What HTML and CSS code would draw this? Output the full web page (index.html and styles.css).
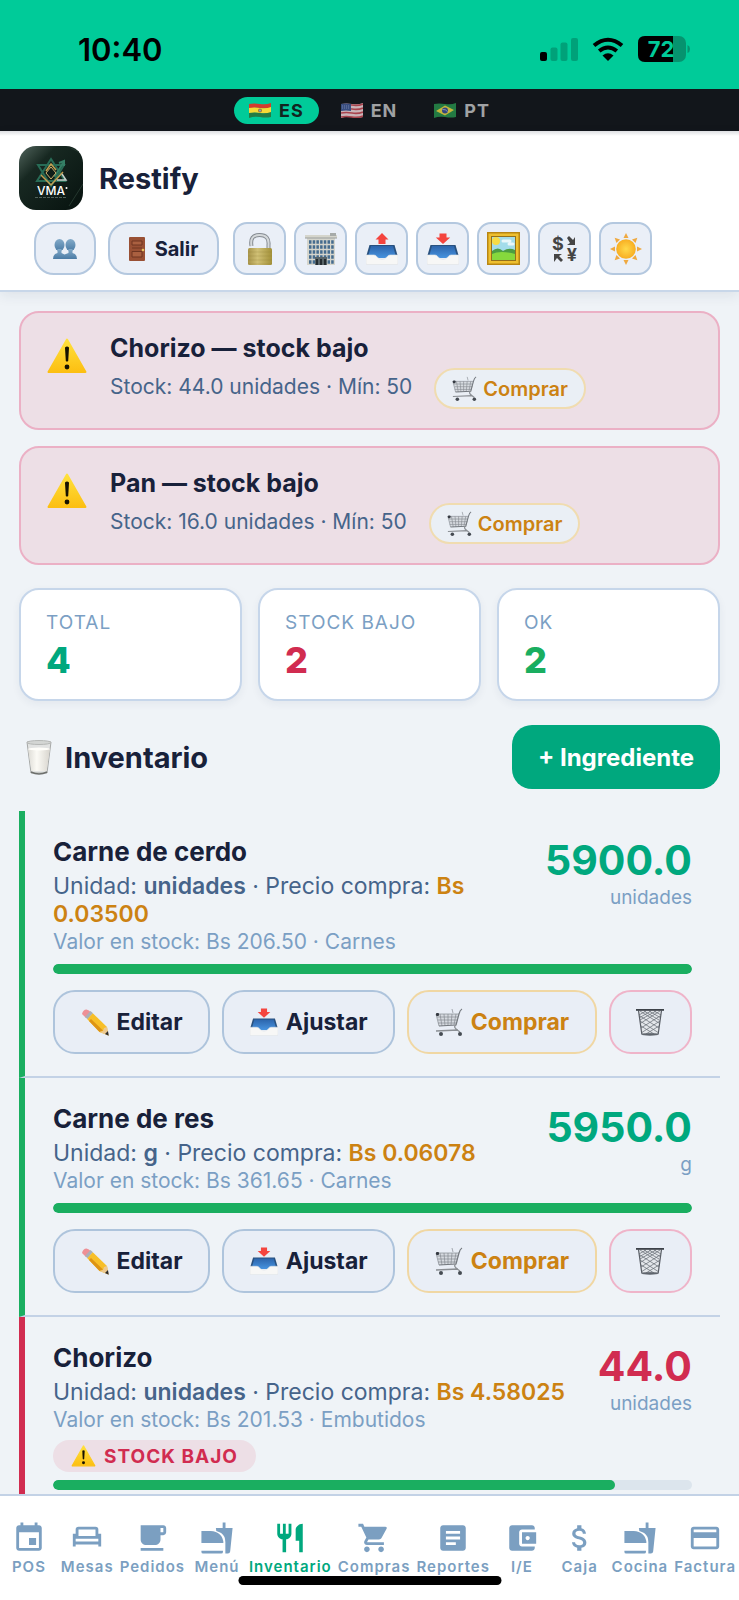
FILE: index.html
```html
<!DOCTYPE html>
<html lang="es">
<head>
  <meta charset="UTF-8">
  <meta name="viewport" content="width=device-width, initial-scale=1.0">
  <title>Restify</title>
  <link rel="stylesheet" href="styles.css">
</head>
<body>

  <!-- shared icons -->
  <svg class="sprite" aria-hidden="true">
    <defs>
      <linearGradient id="gWarn" x1="0" y1="0" x2="0" y2="1"><stop offset="0" stop-color="#ffe13d"/><stop offset="1" stop-color="#fcbf12"/></linearGradient>
      <linearGradient id="gPeople" x1="0" y1="0" x2="0" y2="1"><stop offset="0" stop-color="#84abc9"/><stop offset="1" stop-color="#4a7ba5"/></linearGradient>
      <linearGradient id="gLock" x1="0" y1="0" x2="1" y2="0"><stop offset="0" stop-color="#a8954a"/><stop offset=".4" stop-color="#d0c075"/><stop offset="1" stop-color="#a39139"/></linearGradient>
      <linearGradient id="gTray" x1="0" y1="0" x2="0" y2="1"><stop offset="0" stop-color="#2c64ab"/><stop offset="1" stop-color="#4793df"/></linearGradient>
      <radialGradient id="gSun"><stop offset="0" stop-color="#ffd94a"/><stop offset="1" stop-color="#f8ae22"/></radialGradient>
      <linearGradient id="gLogo" x1="0" y1="0" x2="1" y2="1"><stop offset="0" stop-color="#52655d"/><stop offset=".3" stop-color="#172821"/><stop offset="1" stop-color="#07120f"/></linearGradient>
      <linearGradient id="gMilk" x1="0" y1="0" x2="1" y2="0"><stop offset="0" stop-color="#dedcd6"/><stop offset=".4" stop-color="#fbfaf5"/><stop offset="1" stop-color="#d8d5ce"/></linearGradient>
    </defs>
    <symbol id="warning" viewBox="0 0 40 36">
      <path d="M20 1.500L38.500 34H1.500z" fill="url(#gWarn)" stroke="url(#gWarn)" stroke-width="2" stroke-linejoin="round"/>
      <path d="M18 9.500q2-1.800 4 0l-.8 13.500q-1.200 1.200-2.400 0z" fill="#161200"/>
      <circle cx="20" cy="29" r="2.400" fill="#161200"/>
    </symbol>
    <symbol id="cart" viewBox="0 0 28 28">
      <path d="M1 6h23l-2 11-18 1z" fill="#c9cdd2" opacity=".6"/>
      <g fill="none" stroke="#858a90" stroke-width=".7">
        <path d="M1 6h23M2 9h21M3 12h20M3 15h19M1 6l3 12M5 6l2 12M9 6l1 12M13 6v11M17 6l-1 11M21 6l-2 11"/>
        <path d="M27 1q-2 1-3 5l-3 11-17 1" stroke="#74797f" stroke-width="1.200"/>
        <path d="M21 17q-4 2 4 7M1 23l22-1" stroke="#8b8f94" stroke-width="1.300"/>
        <path d="M18 5l-1-4"/>
      </g>
      <rect x="1" y="5" width="3" height="3" rx="1" fill="#343941"/>
      <circle cx="6" cy="26" r="2" fill="#454b52"/><circle cx="25" cy="26" r="2" fill="#454b52"/>
    </symbol>
    <symbol id="inbox" viewBox="0 0 32 32">
      <path d="M3.500 12h25L32 24H0z" fill="#28517f"/>
      <path d="M5 13h22l2.500 9-4 3H6.500l-4-3z" fill="url(#gTray)"/>
      <path d="M0 22h8q2 0 3 2 5 5 10 0 1-2 3-2h8v8.500q0 1-1 1H1q-1 0-1-1z" fill="#f7f7f6" stroke="#dfe2e6" stroke-width=".6"/>
      <path d="M12.500.5h7v4h3.700L16 11 8.800 4.500h3.700z" fill="#f4443e"/>
    </symbol>
    <symbol id="outbox" viewBox="0 0 32 32">
      <path d="M3.500 12h25L32 24H0z" fill="#28517f"/>
      <path d="M5 13h22l2.500 9-4 3H6.500l-4-3z" fill="url(#gTray)"/>
      <path d="M0 22h8q2 0 3 2 5 5 10 0 1-2 3-2h8v8.500q0 1-1 1H1q-1 0-1-1z" fill="#f7f7f6" stroke="#dfe2e6" stroke-width=".6"/>
      <path d="M16 0l6.500 6.500h-3V11h-7V6.500h-3z" fill="#f4443e"/>
    </symbol>
    <symbol id="pencil" viewBox="0 0 28 28">
      <path d="M5.500 1.500Q2 1.500 1 6l4 4 5-5.500q-2-2.500-4.500-3z" fill="#ee9096"/>
      <path d="M4 9l5.500-6 2.500 2.300-5.500 6z" fill="#aab0b8"/>
      <path d="M6.300 11.200l5.500-6L26 19l1.500 8.500-9-3.500z" fill="#f7bf28"/>
      <path d="M8 13l2-2 12 11.500-3.500 1.500z" fill="#dd9415"/>
      <path d="M18.500 24l3.500-1 1-3 3-1 1.500 8.500z" fill="#ecc991"/>
      <path d="M24 26l3-3 .7 4.700z" fill="#2c2b2b"/>
    </symbol>
    <symbol id="trash" viewBox="0 0 28 28">
      <path d="M2 2h24l-3.500 24h-17z" fill="#e3e6ea"/>
      <path d="M4 3l19 12M8 3l15 9M13 3l12 7M18 3l7 4M4 8l19 12M4 13l19 12M5 18l13 8M24 3L5 15M20 3L4 12M15 3L3 10M10 3L3 7M24 8L5 20M24 13L5 25M23 18l-13 8" fill="none" stroke="#70767e" stroke-width=".8"/>
      <path d="M2.500 2.500L5.800 26h16.400l3.300-23.500" fill="none" stroke="#595e66" stroke-width="1.200"/>
      <path d="M0 1h28v1.800H0z" fill="#3d4249"/>
      <ellipse cx="14" cy="26.500" rx="8.500" ry="1.200" fill="#5f656d"/>
    </symbol>
    <symbol id="fastfood" viewBox="0 0 24 24">
      <path d="M16 5V1h2v4h5l-1.700 16.500q-.2 1.500-1.600 1.500h-1.800v-8q0-4.500-3-6.500-1.400-1-3.400-1.500L11.200 5zM1 7h6.500q4 0 6.500 2.500t2.500 6H1zM1 21h15.200v.8q0 1.200-1.200 1.200H2.200Q1 23 1 21.800z"/>
    </symbol>
  </svg>

  <div class="status-bar">
    <span class="time">10:40</span>
    <div class="status-icons">
      <svg class="signal" viewBox="0 0 38 24">
        <rect x="0" y="15" width="7" height="9" rx="2"/>
        <g opacity=".2"><rect x="10.500" y="10.500" width="7" height="13.500" rx="2"/><rect x="20.500" y="5.500" width="7" height="18.500" rx="2"/><rect x="31" y="1" width="7" height="23" rx="2"/></g>
      </svg>
      <svg class="wifi" viewBox="0 0 32 24">
        <path d="M2 8.500q14-11.500 28 0M7.200 14q8.800-7 17.600 0" fill="none" stroke="#000" stroke-width="4"/>
        <path d="M10.500 18.500q5.500-4.500 11 0L16 24z"/>
      </svg>
      <svg class="battery" viewBox="0 0 52 26">
        <rect width="48" height="26" rx="7" fill="#06936f"/>
        <path d="M7 0h28v26H7q-7 0-7-7V7q0-7 7-7z"/>
        <path d="M49.500 9q2.500 1 2.500 4t-2.500 4z" fill="#06936f"/>
        <text x="23" y="21" text-anchor="middle" class="battery-level">72</text>
      </svg>
    </div>
  </div>

  <div class="lang-bar">
    <button class="lang active">
      <svg class="flag" viewBox="0 0 22 15"><path d="M0 1q5-1 11 0t11-1v5q-5 1-11 0T0 6z" fill="#d53b2e"/><path d="M0 5q5-1 11 0t11-1v6q-5 1-11 0T0 11z" fill="#f6da36"/><path d="M0 10q5-1 11 0t11-1v5q-5 1-11 0T0 15z" fill="#247c45"/><circle cx="11" cy="7.500" r="2" fill="#a3713a"/><circle cx="11" cy="7.500" r="1" fill="#7ab0c5"/></svg>
      ES</button>
    <button class="lang">
      <svg class="flag" viewBox="0 0 22 15"><path d="M0 1q5-1 11 0t11-1v14q-5 1-11 0T0 15z" fill="#c9b4b8"/><path d="M0 2q5-1 11 0t11-1M0 6q5-1 11 0t11-1M0 10q5-1 11 0t11-1M0 14q5-1 11 0t11-1" fill="none" stroke="#a8434d" stroke-width="1.700"/><path d="M0 1q5-1 10 0v7q-5-1-10 0z" fill="#384d80"/><path d="M1 3h8M1 5h8" stroke="#8e99b8" stroke-width=".7" stroke-dasharray="1 1"/></svg>
      EN</button>
    <button class="lang">
      <svg class="flag" viewBox="0 0 22 15"><path d="M0 1q5-1 11 0t11-1v14q-5 1-11 0T0 15z" fill="#237a43"/><path d="M2 8l9-5.500L20 7l-9 5.500z" fill="#c5b63c"/><circle cx="11" cy="7.500" r="3" fill="#34467e"/><path d="M8.500 6.500q3-.5 5 2" stroke="#aab4c5" stroke-width=".7" fill="none"/></svg>
      PT</button>
  </div>

  <header class="header">
    <div class="brand">
      <svg class="logo" viewBox="0 0 64 64">
        <rect width="64" height="64" rx="17" fill="url(#gLogo)"/>
        <path d="M60 6L52 2M64 38L50 60" stroke="#24372f" stroke-width="1"/>
        <path d="M32 13L46 35H18zM32 40L19 19h26z" fill="none" stroke="#286c56" stroke-width="2"/>
        <path d="M32 26l4 4 8-13M40 17l5-2v5" fill="none" stroke="#347f65" stroke-width="2"/>
        <path d="M22 29l10 10 12-13M27 25l5-7 5 6" fill="none" stroke="#c39e50" stroke-width="1.500"/>
        <path d="M32 21l5 6-5 6-5-6z" fill="#101d19" stroke="#d1b16c" stroke-width="1"/>
        <path d="M38 34h9l-4-6" fill="none" stroke="#c5cfca" stroke-width="1.500"/>
        <text x="32" y="49" text-anchor="middle" class="logo-text">VMA</text>
        <circle cx="47.500" cy="42" r="1" fill="#fff"/>
        <path d="M16 51.500h32" stroke="#506159" stroke-width="1" stroke-dasharray="3 1"/>
      </svg>
      <h1>Restify</h1>
    </div>
    <div class="toolbar">
      <button class="tool tool-user" aria-label="Usuarios">
        <svg width="24" height="20" viewBox="0 0 24 20" fill="url(#gPeople)"><ellipse cx="6.500" cy="6" rx="5" ry="6"/><ellipse cx="17.500" cy="6" rx="5" ry="6"/><path d="M4.500 10h4v4l3 1.500 4-1.500v-4h4v4q4.500 1 4.500 6H0q0-5 4.500-6z"/></svg>
      </button>
      <button class="tool tool-exit">
        <svg width="16" height="24" viewBox="0 0 16 24"><rect width="16" height="24" rx="1" fill="#995034"/><path d="M3 4h10v4H3zM3 14.500h10V20H3z" fill="#aa6040" stroke="#6e3521" stroke-width="1"/><path d="M3 11h10" stroke="#713721"/><circle cx="14" cy="13" r="1.300" fill="#e5c462"/></svg>
        Salir
      </button>
      <div class="tool-icons">
        <button class="tool" aria-label="Candado">
          <svg width="26" height="34" viewBox="0 0 26 34"><path d="M4.500 14q-2-11 8-11t9 10v5" fill="none" stroke="#858b91" stroke-width="4"/><path d="M4.500 14q-2-11 8-11t9 10v5" fill="none" stroke="#d5d9db" stroke-width="2"/><rect x="1" y="16" width="24" height="17" rx="1.500" fill="url(#gLock)"/><path d="M1 20h24M1 24h24M1 28h24M1 32h24" stroke="#8d7d36" stroke-width=".6" opacity=".4"/></svg>
        </button>
        <button class="tool" aria-label="Sucursal">
          <svg width="32" height="32" viewBox="0 0 32 32"><path d="M0 2h32v3H0zM2 5h28v27H2z" fill="#d5d5cc"/><path d="M0 5h32" stroke="#9a9e9d"/><path d="M25 0h6v3h-6z" fill="#a7aba9"/><path d="M4 9h25M4 14h25M4 19h25M4 24h25M4 29h25" stroke="#456c8e" stroke-width="3.400" stroke-dasharray="2.500 1.200"/><path d="M10 24h12v8H10z" fill="#596569"/><path d="M12 26v6M16 26v6M20 26v6" stroke="#242d32" stroke-width="2"/></svg>
        </button>
        <button class="tool" aria-label="Exportar"><svg width="32" height="32"><use href="#outbox"/></svg></button>
        <button class="tool" aria-label="Importar"><svg width="32" height="32"><use href="#inbox"/></svg></button>
        <button class="tool" aria-label="Imagen">
          <svg width="33" height="33" viewBox="0 0 33 33"><rect width="33" height="33" fill="#b98612"/><rect x="1.500" y="1.500" width="30" height="30" fill="#eebf2f"/><rect x="4" y="4" width="25" height="25" fill="#93701b"/><rect x="5" y="5" width="23" height="23" fill="#a3dcea"/><circle cx="9" cy="9" r="4" fill="#f7dc45"/><path d="M16 9h7M22 12h4" stroke="#eaf7fa" stroke-width="3" stroke-linecap="round"/><path d="M5 19q6-5 11 0 6-4 12-1v10H5z" fill="#4c9d42"/><path d="M5 22q8-4 23 0v6H5z" fill="#86d83d"/></svg>
        </button>
        <button class="tool" aria-label="Tipo de cambio">
          <svg width="28" height="34" viewBox="0 0 28 34" fill="#454545"><text x="7" y="18" text-anchor="middle" class="currency">$</text><text x="21" y="29" text-anchor="middle" class="currency">¥</text><path d="M16 6l2-2 4 4 2-3v8h-8l3-2zM3 22h8l-3 2 4 4-2 2-4-4-3 4z"/></svg>
        </button>
        <button class="tool" aria-label="Tema claro">
          <svg width="32" height="32" viewBox="0 0 32 32"><g fill="#efa940"><path id="ray" d="M13.500 5L16 0l2.500 5z"/><use href="#ray" transform="rotate(45 16 16)"/><use href="#ray" transform="rotate(90 16 16)"/><use href="#ray" transform="rotate(135 16 16)"/><use href="#ray" transform="rotate(180 16 16)"/><use href="#ray" transform="rotate(225 16 16)"/><use href="#ray" transform="rotate(270 16 16)"/><use href="#ray" transform="rotate(315 16 16)"/></g><circle cx="16" cy="16" r="9.800" fill="url(#gSun)"/></svg>
        </button>
      </div>
    </div>
  </header>

  <main class="content">

    <section class="alert">
      <svg class="alert-icon"><use href="#warning"/></svg>
      <div>
        <h2>Chorizo — stock bajo</h2>
        <div class="alert-row">
          <p>Stock: 44.0 unidades · Mín: 50</p>
          <button class="btn-buy"><svg><use href="#cart"/></svg>Comprar</button>
        </div>
      </div>
    </section>

    <section class="alert">
      <svg class="alert-icon"><use href="#warning"/></svg>
      <div>
        <h2>Pan — stock bajo</h2>
        <div class="alert-row">
          <p>Stock: 16.0 unidades · Mín: 50</p>
          <button class="btn-buy"><svg><use href="#cart"/></svg>Comprar</button>
        </div>
      </div>
    </section>

    <div class="stats">
      <div class="stat"><p class="stat-label">Total</p><p class="stat-value">4</p></div>
      <div class="stat"><p class="stat-label">Stock bajo</p><p class="stat-value red">2</p></div>
      <div class="stat"><p class="stat-label">OK</p><p class="stat-value ok">2</p></div>
    </div>

    <div class="section-head">
      <svg class="milk" viewBox="0 0 26 35"><path d="M1 2l4 31h16l4-31z" fill="#e2e3e2" stroke="#a6a8a7" stroke-width="1"/><path d="M2 9h22l-3.500 22h-15z" fill="url(#gMilk)"/><ellipse cx="13" cy="2.500" rx="12" ry="2" fill="#d4d6d4" stroke="#b6b8b6"/><ellipse cx="13" cy="9" rx="11" ry="1.500" fill="#fffefa"/><path d="M5 32q8 4 16 0" fill="none" stroke="#6d6f6c" stroke-width="1.500"/></svg>
      <h2>Inventario</h2>
      <button class="btn-add">+ Ingrediente</button>
    </div>

    <ul class="items">
      <li class="item">
        <div class="item-top">
          <div class="item-info">
            <h3>Carne de cerdo</h3>
            <p class="unit">Unidad: <b>unidades</b> · Precio compra: <b class="price">Bs 0.03500</b></p>
            <p class="value">Valor en stock: Bs 206.50 · Carnes</p>
          </div>
          <div class="qty"><strong>5900.0</strong><span>unidades</span></div>
        </div>
        <div class="bar"><div class="bar-fill" style="width: 100%"></div></div>
        <div class="actions">
          <button class="btn"><svg><use href="#pencil"/></svg>Editar</button>
          <button class="btn"><svg><use href="#inbox"/></svg>Ajustar</button>
          <button class="btn buy"><svg><use href="#cart"/></svg>Comprar</button>
          <button class="btn delete" aria-label="Eliminar"><svg><use href="#trash"/></svg></button>
        </div>
      </li>

      <li class="item">
        <div class="item-top">
          <div class="item-info">
            <h3>Carne de res</h3>
            <p class="unit">Unidad: <b>g</b> · Precio compra: <b class="price">Bs 0.06078</b></p>
            <p class="value">Valor en stock: Bs 361.65 · Carnes</p>
          </div>
          <div class="qty"><strong>5950.0</strong><span>g</span></div>
        </div>
        <div class="bar"><div class="bar-fill" style="width: 100%"></div></div>
        <div class="actions">
          <button class="btn"><svg><use href="#pencil"/></svg>Editar</button>
          <button class="btn"><svg><use href="#inbox"/></svg>Ajustar</button>
          <button class="btn buy"><svg><use href="#cart"/></svg>Comprar</button>
          <button class="btn delete" aria-label="Eliminar"><svg><use href="#trash"/></svg></button>
        </div>
      </li>

      <li class="item low">
        <div class="item-top">
          <div class="item-info">
            <h3>Chorizo</h3>
            <p class="unit">Unidad: <b>unidades</b> · Precio compra: <b class="price">Bs 4.58025</b></p>
            <p class="value">Valor en stock: Bs 201.53 · Embutidos</p>
            <span class="badge"><svg><use href="#warning"/></svg>Stock bajo</span>
          </div>
          <div class="qty"><strong>44.0</strong><span>unidades</span></div>
        </div>
        <div class="bar"><div class="bar-fill" style="width: 88%"></div></div>
      </li>
    </ul>
  </main>

  <nav class="tabs">
    <a href="#"><svg viewBox="0 0 24 24"><path d="M17 12h-5v5h5v-5zM16 1v2H8V1H6v2H5c-1.110 0-1.990.9-1.990 2L3 19c0 1.100.89 2 2 2h14c1.100 0 2-.9 2-2V5c0-1.100-.9-2-2-2h-1V1h-2zm3 18H5V8h14v11z"/></svg>POS</a>
    <a href="#"><svg viewBox="0 0 24 24"><path d="M5 11V6a1 1 0 0 1 1-1h12a1 1 0 0 1 1 1v5M3 18V9M21 18V9M3 11.500h18M3 15.500h18" fill="none" stroke="currentColor" stroke-width="2"/></svg>Mesas</a>
    <a href="#"><svg viewBox="0 0 24 24"><path d="M20 3H4v10c0 2.210 1.790 4 4 4h6c2.210 0 4-1.790 4-4v-3h2c1.110 0 2-.9 2-2V5c0-1.110-.89-2-2-2zm0 5h-2V5h2v3zM4 19h16v2H4z"/></svg>Pedidos</a>
    <a href="#"><svg><use href="#fastfood"/></svg>Menú</a>
    <a href="#" class="active"><svg viewBox="0 0 24 24"><path d="M11 9H9V2H7v7H5V2H3v7c0 2.120 1.660 3.840 3.750 3.970V22h2.500v-9.030C11.340 12.840 13 11.120 13 9V2h-2v7zm5-3v8h2.500v8H21V2c-2.760 0-5 2.240-5 4z"/></svg>Inventario</a>
    <a href="#"><svg viewBox="0 0 24 24"><path d="M7 18c-1.100 0-1.990.9-1.990 2S5.900 22 7 22s2-.9 2-2-.9-2-2-2zM1 2v2h2l3.600 7.590-1.350 2.450c-.16.28-.25.61-.25.96 0 1.100.9 2 2 2h12v-2H7.420c-.14 0-.25-.11-.25-.25l.03-.12.9-1.630h7.450c.75 0 1.410-.41 1.750-1.030l3.580-6.490A1 1 0 0 0 20 4H5.210l-.94-2H1zm16 16c-1.100 0-1.990.9-1.990 2s.89 2 1.990 2 2-.9 2-2-.9-2-2-2z"/></svg>Compras</a>
    <a href="#"><svg viewBox="0 0 24 24"><path d="M19 3H5c-1.100 0-2 .9-2 2v14c0 1.100.9 2 2 2h14c1.100 0 2-.9 2-2V5c0-1.100-.9-2-2-2zm-5 14H7v-2h7v2zm3-4H7v-2h10v2zm0-4H7V7h10v2z"/></svg>Reportes</a>
    <a href="#"><svg viewBox="0 0 24 24"><path d="M21 18v1c0 1.100-.9 2-2 2H5c-1.110 0-2-.9-2-2V5c0-1.100.89-2 2-2h14c1.100 0 2 .9 2 2v1h-9c-1.110 0-2 .9-2 2v8c0 1.100.89 2 2 2h9zm-9-2h10V8H12v8zm4-2.500c-.83 0-1.500-.67-1.500-1.500s.67-1.500 1.500-1.500 1.500.67 1.500 1.500-.67 1.500-1.500 1.500z"/></svg>I/E</a>
    <a href="#"><svg viewBox="0 0 24 24"><path d="M11.800 10.900c-2.270-.59-3-1.200-3-2.150 0-1.090 1.010-1.850 2.700-1.850 1.780 0 2.440.85 2.500 2.100h2.210c-.07-1.720-1.120-3.300-3.210-3.810V3h-3v2.160c-1.940.42-3.500 1.680-3.500 3.610 0 2.310 1.910 3.460 4.700 4.130 2.500.6 3 1.480 3 2.410 0 .69-.49 1.790-2.700 1.790-2.060 0-2.870-.92-2.980-2.100h-2.200c.12 2.190 1.760 3.420 3.680 3.830V21h3v-2.150c1.950-.37 3.500-1.500 3.500-3.550 0-2.840-2.430-3.810-4.700-4.400z"/></svg>Caja</a>
    <a href="#"><svg><use href="#fastfood"/></svg>Cocina</a>
    <a href="#"><svg viewBox="0 0 24 24"><path d="M20 4H4c-1.110 0-1.990.89-1.990 2L2 18c0 1.110.89 2 2 2h16c1.110 0 2-.89 2-2V6c0-1.110-.89-2-2-2zm0 14H4v-6h16v6zm0-10H4V6h16v2z"/></svg>Factura</a>
    <div class="home-indicator"></div>
  </nav>

</body>
</html>
```
FILE: styles.css
```css
* {
  box-sizing: border-box;
}

html, body, h1, h2, h3, p, ul {
  margin: 0;
  padding: 0;
}

body {
  display: flex;
  flex-direction: column;
  height: 100vh;
  background: #eff3f7;
  color: #18213a;
  font-family: Inter, "Liberation Sans", sans-serif;
  font-size: 20px;
}

button {
  margin: 0;
  padding: 0;
  border: 0;
  background: none;
  color: inherit;
  font: inherit;
  white-space: nowrap;
  cursor: pointer;
}

svg {
  display: block;
  flex: none;
}

.sprite {
  position: absolute;
  width: 0;
  height: 0;
}

/* phone status bar */
.status-bar {
  display: flex;
  flex: none;
  align-items: center;
  justify-content: space-between;
  height: 89px;
  padding: 9px 49px 0 78px;
  background: #00cb99;
  color: #000;
}

.time {
  font-size: 31px;
  font-weight: 600;
}

.status-icons {
  display: flex;
  align-items: center;
  gap: 14px;
}

.signal {
  width: 38px;
  height: 24px;
}

.wifi {
  width: 32px;
  height: 24px;
}

.battery {
  width: 52px;
  height: 26px;
}

.battery-level {
  fill: #00cb99;
  font-size: 22px;
  font-weight: 700;
}

/* language switch */
.lang-bar {
  display: flex;
  flex: none;
  align-items: center;
  justify-content: center;
  gap: 7px;
  height: 42px;
  background: #12161b;
}

.lang {
  display: flex;
  align-items: center;
  gap: 8px;
  height: 27px;
  padding: 0 15px;
  border-radius: 14px;
  color: #a0a2a4;
  font-size: 18px;
  font-weight: 700;
  letter-spacing: 1px;
}

.lang.active {
  background: #00cb99;
  color: #12241f;
}

.flag {
  width: 22px;
  height: 15px;
}

/* header */
.header {
  z-index: 1;
  flex: none;
  padding: 15px 19px;
  border-bottom: 2px solid #c8d7e9;
  background: linear-gradient(#dddfe2, #fff 5px);
  box-shadow: 0 4px 12px rgba(30, 50, 80, .08);
}

.brand {
  display: flex;
  align-items: center;
  gap: 16px;
}

.logo {
  width: 64px;
  height: 64px;
}

.logo-text {
  fill: #fff;
  font-size: 12px;
  font-weight: 500;
}

.brand h1 {
  font-size: 29px;
  font-weight: 700;
}

.toolbar {
  display: flex;
  gap: 12px;
  margin-top: 12px;
  padding-left: 15px;
}

.tool {
  display: flex;
  align-items: center;
  justify-content: center;
  width: 53px;
  height: 53px;
  border: 2px solid #b4c8df;
  border-radius: 14px;
  background: #eaeff7;
}

.tool-user {
  width: 62px;
  border-radius: 20px;
}

.tool-exit {
  gap: 10px;
  width: 111px;
  border-radius: 20px;
  font-weight: 700;
}

.tool-icons {
  display: flex;
  gap: 8px;
  margin-left: 2px;
}

.currency {
  font-size: 18px;
  font-weight: 700;
}

/* content */
.content {
  flex: 1;
  min-height: 0;
  padding: 19px 19px 0;
  overflow-y: auto;
  scrollbar-width: none;
}

.alert {
  display: flex;
  gap: 23px;
  margin-bottom: 16px;
  padding: 19px 26px;
  border: 2px solid #ebb0c5;
  border-radius: 20px;
  background: #eddfe6;
}

.alert-icon {
  width: 40px;
  height: 36px;
  margin-top: 6px;
}

.alert h2 {
  font-size: 25px;
  font-weight: 700;
  line-height: 32px;
}

.alert-row {
  display: flex;
  gap: 22px;
  margin-top: 4px;
}

.alert p {
  color: #46648a;
  font-size: 21px;
  line-height: 38px;
}

.btn-buy {
  display: flex;
  align-items: center;
  gap: 6px;
  height: 41px;
  padding: 0 16px;
  border: 2px solid #f0dcb0;
  border-radius: 21px;
  background: #eaeff5;
  color: #cc8212;
  font-size: 20px;
  font-weight: 600;
}

.btn-buy svg {
  width: 25px;
  height: 25px;
}

.stats {
  display: grid;
  grid-template-columns: repeat(3, 1fr);
  gap: 16px;
  margin-top: 23px;
}

.stat {
  padding: 20px 25px 17px;
  border: 2px solid #c6d6ea;
  border-radius: 20px;
  background: #fff;
  box-shadow: 0 3px 8px rgba(30, 50, 80, .06);
}

.stat-label {
  color: #7b9fc4;
  font-size: 19px;
  line-height: 26px;
  letter-spacing: 1px;
  text-transform: uppercase;
}

.stat-value {
  margin-top: 2px;
  color: #00a87e;
  font-size: 36px;
  font-weight: 800;
  line-height: 44px;
}

.stat-value.red {
  color: #d12c50;
}

.stat-value.ok {
  color: #1aae60;
}

.section-head {
  display: flex;
  align-items: center;
  margin: 24px 0 22px;
  padding-left: 7px;
}

.milk {
  width: 26px;
  height: 35px;
}

.section-head h2 {
  margin-left: 13px;
  font-size: 29px;
  font-weight: 700;
}

.btn-add {
  height: 64px;
  margin-left: auto;
  padding: 0 26px;
  border-radius: 20px;
  background: #00a87e;
  color: #fff;
  font-size: 24px;
  font-weight: 700;
}

/* ingredient list */
.items {
  list-style: none;
}

.item {
  padding: 25px 28px 22px;
  border-bottom: 2px solid #c3d2e6;
  border-left: 6px solid #1aae60;
}

.item.low {
  border-left-color: #d12c50;
}

.item-top {
  display: flex;
  gap: 16px;
}

.item-info {
  flex: 1;
}

.item h3 {
  margin-bottom: 4px;
  font-size: 26px;
  font-weight: 700;
  line-height: 32px;
}

.unit {
  color: #46648a;
  font-size: 23px;
  line-height: 28px;
}

.unit b {
  font-weight: 600;
}

.unit .price {
  color: #cc8212;
}

.value {
  color: #7b9fc4;
  font-size: 21px;
  line-height: 28px;
}

.qty {
  text-align: right;
}

.qty strong {
  display: block;
  color: #00a87e;
  font-size: 41px;
  font-weight: 700;
  line-height: 48px;
}

.low .qty strong {
  color: #d12c50;
}

.qty span {
  color: #7b9fc4;
  font-size: 19px;
  line-height: 28px;
}

.badge {
  display: inline-flex;
  align-items: center;
  gap: 8px;
  height: 32px;
  margin-top: 6px;
  padding: 0 18px;
  border-radius: 16px;
  background: #eddfe6;
  color: #d12c50;
  font-size: 19px;
  font-weight: 700;
  letter-spacing: 1px;
  text-transform: uppercase;
  vertical-align: top;
}

.badge svg {
  width: 25px;
  height: 22px;
}

.bar {
  height: 10px;
  margin-top: 8px;
  border-radius: 5px;
  background: #dce5ed;
  overflow: hidden;
}

.bar-fill {
  height: 100%;
  border-radius: 5px;
  background: #1aae60;
}

.actions {
  display: flex;
  gap: 12px;
  margin-top: 16px;
}

.btn {
  display: flex;
  flex: 1 1 auto;
  align-items: center;
  justify-content: center;
  gap: 8px;
  height: 64px;
  padding: 0 24px;
  border: 2px solid #aec4dc;
  border-radius: 22px;
  background: #e9eef6;
  font-size: 23px;
  font-weight: 700;
}

.btn svg {
  width: 28px;
  height: 28px;
}

.btn.buy {
  border-color: #f0d7a3;
  color: #cc8212;
}

.btn.delete {
  border-color: #efb4c9;
}

/* bottom tabs */
.tabs {
  position: relative;
  display: flex;
  flex: none;
  padding: 25px 0 23px;
  border-top: 2px solid #c3d2e6;
  background: #fff;
}

.tabs a {
  display: flex;
  flex: 1 1 0;
  flex-direction: column;
  align-items: center;
  gap: 2px;
  padding: 0 3px;
  color: #7b9fc1;
  font-size: 15px;
  font-weight: 600;
  letter-spacing: 1px;
  line-height: 20px;
  text-decoration: none;
}

.tabs a.active {
  color: #00a87e;
}

.tabs svg {
  width: 34px;
  height: 34px;
  fill: currentColor;
}

/* lies over the tab labels */
.home-indicator {
  position: absolute;
  bottom: 15px;
  left: 50%;
  width: 263px;
  height: 9px;
  border-radius: 5px;
  background: #000;
  transform: translateX(-50%);
}
```
